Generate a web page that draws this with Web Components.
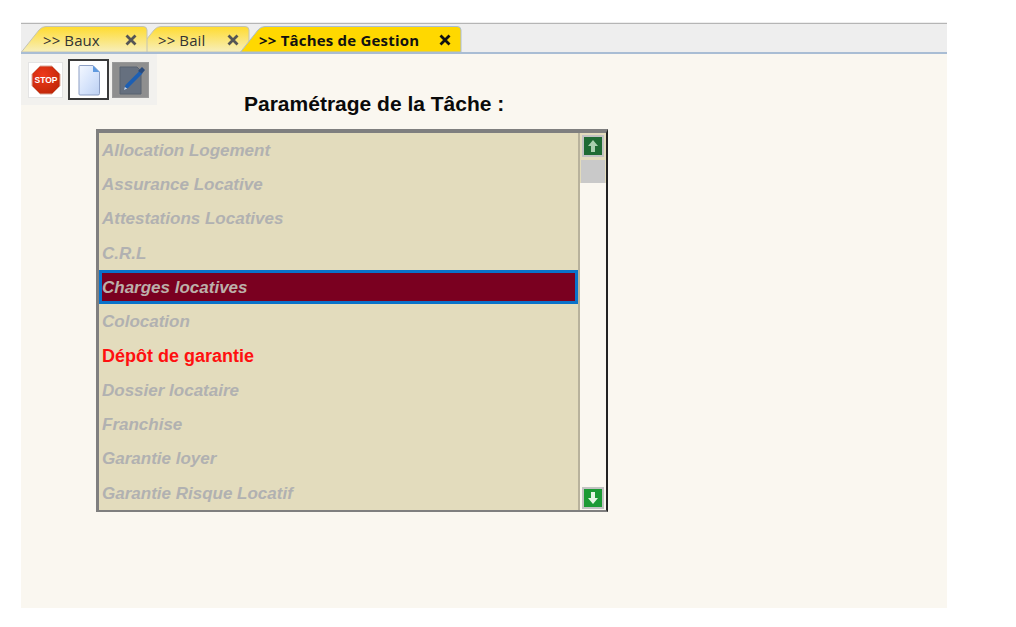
<!DOCTYPE html>
<html lang="fr">
<head>
<meta charset="utf-8">
<title>Tâches de Gestion</title>
<style>
    html, body { margin: 0; height: 100%; background: #fff; }
    body { padding: 22px 0 0 21px; box-sizing: border-box; font-family: "Liberation Sans", Arial, sans-serif; overflow: hidden; }
</style>
</head>
<body>
<gestion-window>
    <tab-strip slot="tabs">
        <tab-item label=">> Baux" width="127" z="3"></tab-item>
        <tab-item label=">> Bail" width="114" z="2" style="margin-left:-12px"></tab-item>
        <tab-item label=">> Tâches de Gestion" width="222" z="4" active style="margin-left:-10px"></tab-item>
    </tab-strip>
    <tool-bar slot="tools">
        <tool-button icon="stop"></tool-button>
        <tool-button icon="doc" selected></tool-button>
        <tool-button icon="edit"></tool-button>
    </tool-bar>
    <span slot="title">Paramétrage de la Tâche :</span>
    <task-list>
        <task-row>Allocation Logement</task-row>
        <task-row>Assurance Locative</task-row>
        <task-row>Attestations Locatives</task-row>
        <task-row>C.R.L</task-row>
        <task-row selected>Charges locatives</task-row>
        <task-row>Colocation</task-row>
        <task-row active>Dépôt de garantie</task-row>
        <task-row>Dossier locataire</task-row>
        <task-row>Franchise</task-row>
        <task-row>Garantie loyer</task-row>
        <task-row>Garantie Risque Locatif</task-row>
    </task-list>
</gestion-window>

<script>
const ICONS = {
    stop: `<svg width="32" height="32" viewBox="0 0 32 32">
        <defs><radialGradient id="r" cx=".4" cy=".35" r=".8"><stop offset="0" stop-color="#ef3a1c"/><stop offset="1" stop-color="#b92405"/></radialGradient></defs>
        <polygon points="10,2 22,2 30,10 30,22 22,30 10,30 2,22 2,10" fill="url(#r)" stroke="#d9a99a" stroke-width="1" stroke-linejoin="round"/>
        <text x="16" y="19" text-anchor="middle" font-family="Liberation Sans, sans-serif" font-weight="700" font-size="8.500" fill="#fff">STOP</text>
    </svg>`,
    doc: `<svg width="24" height="32" viewBox="0 0 24 32">
        <defs><linearGradient id="d" x1="0" y1="0" x2="1" y2="1"><stop offset="0" stop-color="#f4f8ff"/><stop offset=".55" stop-color="#d5e3fb"/><stop offset="1" stop-color="#bcd0f2"/></linearGradient></defs>
        <path d="M2 2.500a1 1 0 0 1 1-1h13l6.500 6.500v21.500a1.500 1.500 0 0 1-1.500 1.500h-18a1 1 0 0 1-1-1z" fill="url(#d)" stroke="#8d9fc4"/>
        <path d="M16 1.500l6.500 6.500h-6.500z" fill="#5f9ae0"/>
    </svg>`,
    edit: `<svg width="32" height="32" viewBox="0 0 32 32">
        <path d="M5 3h17l4 4v23h-21z" fill="#66707f" stroke="#596270"/>
        <path d="M9 26l1.500-5 14-14 3 2.500-14 14z" fill="#1c5fb4"/>
        <path d="M23 7l4-4 3 3-3 3.500z" fill="#2a4b7c"/>
        <path d="M9 26l.800-3 2.400 1.600z" fill="#c9d5e6"/>
    </svg>`,
    close: `<svg width="14" height="14" viewBox="0 0 14 14"><path d="M2.500 2.500l9 9M11.500 2.500l-9 9" fill="none" stroke="currentColor" stroke-width="2.800"/></svg>`
};

class GestionWindow extends HTMLElement {
    constructor() {
        super();
        this.attachShadow({mode: 'open'}).innerHTML = `
            <style>
                :host { display: flex; flex-direction: column; width: 926px; height: 586px; background: #faf7f0; }
                .top { height: 32px; flex: none; box-sizing: border-box; background: #eeeeee; border-top: 1px solid #eeeeee; border-bottom: 2px solid #a9bdd4; box-shadow: inset 0 1px 0 #b5b5b5; }
                .row { display: flex; align-items: flex-start; height: 75px; flex: none; }
                .title { margin: 38px 0 0 87px; font-size: 21px; line-height: 24px; font-weight: 700; color: #0a0a0a; white-space: nowrap; }
                .body { padding-left: 75px; }
            </style>
            <div class="top"><slot name="tabs"></slot></div>
            <div class="row">
                <slot name="tools"></slot>
                <div class="title"><slot name="title"></slot></div>
            </div>
            <div class="body"><slot></slot></div>`;
    }
}

class TabStrip extends HTMLElement {
    constructor() {
        super();
        this.attachShadow({mode: 'open'}).innerHTML = `
            <style>
                :host { display: flex; align-items: flex-end; height: 29px; }
            </style>
            <slot></slot>`;
    }
}

class TabItem extends HTMLElement {
    constructor() {
        super();
        const w = +this.getAttribute('width');
        const active = this.hasAttribute('active');
        const fill = active ? '#ffd800' : 'url(#g)';
        const edge = active ? '#a9bdd4' : '#c4c4b4';
        this.attachShadow({mode: 'open'}).innerHTML = `
            <style>
                :host { display: block; position: relative; width: ${w}px; height: 26px; flex: none;
                    font-size: 15px; color: ${active ? '#111' : '#333'}; font-weight: ${active ? 700 : 400}; z-index: ${this.getAttribute('z')}; }
                svg.shape { position: absolute; left: 0; top: 0; }
                .in { position: relative; display: flex; align-items: center; justify-content: space-between; height: 27px; padding: 0 10px 0 ${active ? 19 : 22}px; box-sizing: border-box; font-family: "Open Sans", "Liberation Sans", sans-serif; white-space: nowrap; letter-spacing: ${active ? '.2px' : '.1px'}; }
                .x { display: flex; color: ${active ? '#111' : '#555'}; }
            </style>
            <svg class="shape" width="${w}" height="26">
                <defs><linearGradient id="g" x1="0" y1="0" x2="0" y2="1"><stop offset="0" stop-color="#ffdb2e"/><stop offset="1" stop-color="#f7efbd"/></linearGradient></defs>
                <path d="M.5 26L18 4Q21 .5 25 .5H${w - 5}Q${w - 1} .5 ${w - 1} 4V26Z" fill="${fill}" stroke="${edge}"/>
            </svg>
            <div class="in"><span>${this.getAttribute('label').replace(/>/g, '&gt;')}</span><span class="x">${ICONS.close}</span></div>`;
    }
}

class ToolBar extends HTMLElement {
    constructor() {
        super();
        this.attachShadow({mode: 'open'}).innerHTML = `
            <style>
                :host { display: flex; align-items: center; gap: 5px; width: 136px; height: 51px; flex: none; box-sizing: border-box; padding: 0 8px 0 7px; background: #f2f1ee; }
            </style>
            <slot></slot>`;
    }
}

class ToolButton extends HTMLElement {
    constructor() {
        super();
        const icon = this.getAttribute('icon');
        const sel = this.hasAttribute('selected');
        const dark = icon === 'edit';
        this.attachShadow({mode: 'open'}).innerHTML = `
            <style>
                :host { display: flex; align-items: center; justify-content: center; box-sizing: border-box; flex: none;
                    width: ${sel ? 41 : dark ? 37 : 35}px; height: ${sel ? 41 : 36}px;
                    background: ${dark ? '#8f8f8f' : '#fff'};
                    border: ${sel ? '2px solid #3a3a3a' : '1px solid ' + (dark ? '#9a9a9a' : '#e4e4e4')}; margin-left: ${dark ? -2 : 0}px; }
            </style>
            ${ICONS[icon]}`;
    }
}

class TaskList extends HTMLElement {
    constructor() {
        super();
        this.attachShadow({mode: 'open'}).innerHTML = `
            <style>
                :host { display: flex; width: 512px; height: 383px; box-sizing: border-box; background: #e3dcbd; border-top: 4px solid #7f7f7f; border-left: 3px solid #7f7f7f; border-bottom: 2px solid #7f7f7f; border-right: 2px solid #222; }
                .rows { flex: 1; min-width: 0; border-right: 2px solid #b8b29c; }
                .bar { display: flex; flex-direction: column; width: 26px; flex: none; background: #faf7f0; }
                .head { background: #e3dcbd; height: 50px; flex: none; display: flex; flex-direction: column; align-items: center; padding-top: 2px; box-sizing: border-box; }
                .thumb { width: 24px; height: 24px; background: #c9c9c9; margin-top: 3px; }
                .arrow { width: 22px; height: 22px; flex: none; box-sizing: border-box; border: 2px solid #c2c2c2; display: flex; }
                .down { margin: auto 0 1px 2px; }
            </style>
            <div class="rows"><slot></slot></div>
            <div class="bar">
                <div class="head">
                    <div class="arrow">
                        <svg width="18" height="18" viewBox="0 0 18 18"><rect width="18" height="18" fill="#1f6b33"/><path d="M9 3l5 6h-3v6h-4v-6h-3z" fill="#a9cfae"/></svg>
                    </div>
                    <div class="thumb"></div>
                </div>
                <div class="arrow down">
                    <svg width="18" height="18" viewBox="0 0 18 18"><rect width="18" height="18" fill="#1c9a35"/><path d="M9 15l-5-6h3v-6h4v6h3z" fill="#e6f5e4"/></svg>
                </div>
            </div>`;
    }
}

class TaskRow extends HTMLElement {
    constructor() {
        super();
        this.attachShadow({mode: 'open'}).innerHTML = `
            <style>
                :host { display: flex; align-items: center; box-sizing: border-box; height: 34.3px; padding: 1px 0 0 3px; font-size: 17px; font-weight: 700; font-style: italic; color: #b1b1b1; white-space: nowrap; }
                :host([selected]) { background: #7a0020; border: 3px solid #0a72c9; padding: 1px 0 0 0; color: #bcb0aa; }
                :host([active]) { color: #ff1010; font-style: normal; font-size: 18px; }
            </style>
            <slot></slot>`;
    }
}

customElements.define('gestion-window', GestionWindow);
customElements.define('tab-strip', TabStrip);
customElements.define('tab-item', TabItem);
customElements.define('tool-bar', ToolBar);
customElements.define('tool-button', ToolButton);
customElements.define('task-list', TaskList);
customElements.define('task-row', TaskRow);
</script>
</body>
</html>
